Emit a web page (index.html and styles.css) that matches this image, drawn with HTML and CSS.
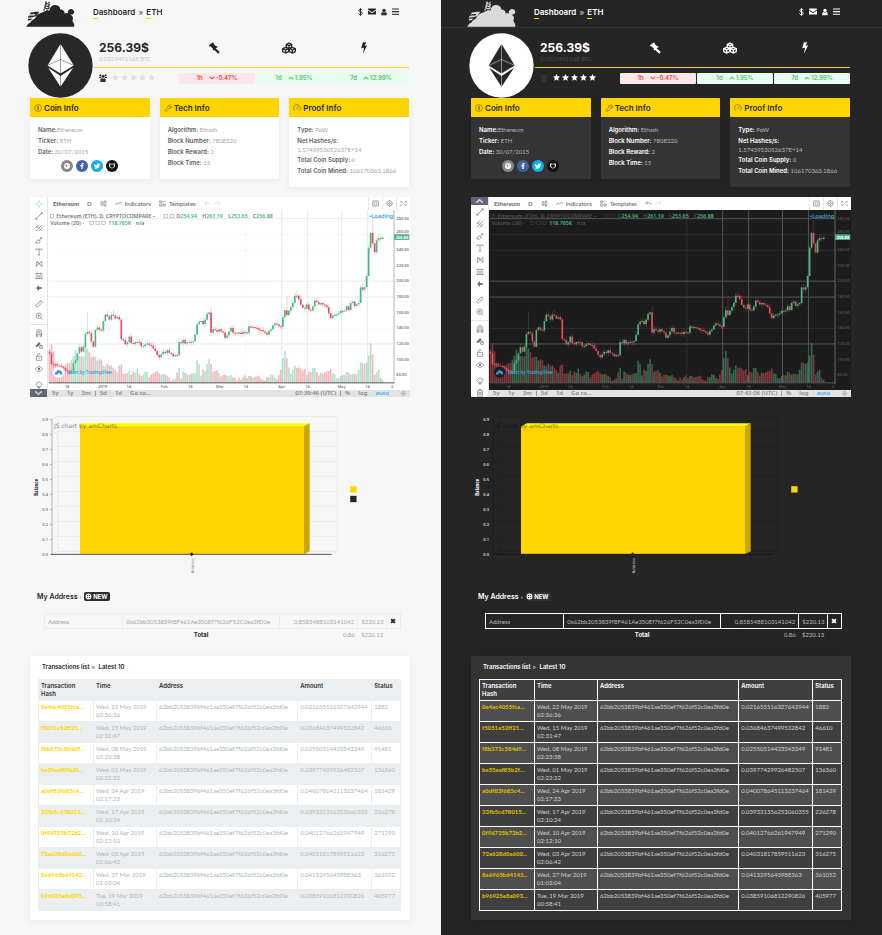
FILE: index.html
```
<!DOCTYPE html>
<html lang="en">
<head>
<meta charset="utf-8">
<title>Dashboard » ETH</title>
<link rel="stylesheet" href="styles.css">
</head>
<body>
<svg class="sprite" aria-hidden="true">
  <symbol id="logo" viewBox="78 0 148 82" overflow="visible">
    <path d="M78 81C82 76 84 70 91 68C95 60 103 59 107 53C111 43 119 39 129 37C134 34 142 31 149 32C151 22 155 15 166 15C178 16 181 22 182 29C190 29 196 34 195 42C200 38 205 40 206 44C203 37 205 28 214 27C224 28 228 38 220 43C216 45 213 44 211 43C217 47 222 51 220 58C217 63 220 67 222 70C225 74 224 78 224 81Z"/>
    <path d="M92 38l20-2-3 6-20 2zM86 48l18-2-3 6-18 2zM84 57l12-1-3 5-10 1zM105 36l13 0-10 14-6-1 5-9z"/>
    <text x="132" y="28" transform="rotate(12 143 20)" class="logo-b">B</text>
    <path d="M137 4l4 1-1 5-4-1zM146 5l4 1-1 5-4-1zM131 27l4 1-1 5-4-1zM140 29l4 1-1 5-4-1z"/>
  </symbol>
  <symbol id="dollar" viewBox="0 0 10 16"><path d="M8.600 4.500C8 3 6.800 2.600 5 2.600C3 2.600 1.700 3.500 1.700 5C1.700 8.600 8.600 6.800 8.600 10.700C8.600 12.400 7 13.300 5 13.300C3 13.300 1.600 12.500 1.200 10.900M5 .5V15.500" class="line2"/></symbol>
  <symbol id="mail" viewBox="0 0 16 14"><path d="M0 2Q0 1 1 1H15Q16 1 16 2V3L8 8.500L0 3ZM0 5L8 10.500L16 5V12Q16 13 15 13H1Q0 13 0 12Z"/></symbol>
  <symbol id="user" viewBox="0 0 14 16"><circle cx="7" cy="4.500" r="4"/><path d="M3 8Q7 11 11 8Q14 9 13.500 15.500H.5Q0 9 3 8Z"/></symbol>
  <symbol id="menu" viewBox="0 0 16 16"><path d="M0 1h16v2.500H0zM0 7h16v2.500H0zM0 13h16v2.500H0z"/></symbol>
  <symbol id="eth" viewBox="82 102 196 196">
    <circle cx="180" cy="200" r="97" class="coin"/>
    <path class="gem" d="M180 135L220 200L180 224L141 200Z"/><path class="gem" d="M143 207L180 232L218 207L180 264Z"/>
    <path class="cut" d="M180 135V264M141 200L180 182L220 200"/>
  </symbol>
  <symbol id="gavel" viewBox="0 0 34 34"><path d="M14 1l3 3-1 2 7 6 2-1 2 3-11 10-3-3 1-2-7-7-2 1-3-3zM19 16l13 11q2 4-3 6L15 20z"/></symbol>
  <symbol id="cubes" viewBox="0 0 42 34"><path class="cube" d="M21 2l8 4v9l-8 4-8-4V6zM13 6l8 4 8-4M21 10v9M11 15l9 4v9l-9 4-9-4v-9zM2 19l9 4 9-4M11 23v9M31 15l9 4v9l-9 4-9-4v-9zM22 19l9 4 9-4M31 23v9"/></symbol>
  <symbol id="bolt" viewBox="0 0 20 34"><path d="M7 1h9l-4 10 7-2L7 33l3-17-8 2z"/></symbol>
  <symbol id="users" viewBox="0 0 24 24"><circle cx="4" cy="4" r="3"/><circle cx="20" cy="4" r="3"/><circle cx="12" cy="7" r="4.500"/><path d="M0 8h7l-1 4q-5 0-6-1zM24 8h-7l1 4q5 0 6-1zM6 12q6 3 12 0q3 3 2 12H4q-1-9 2-12z"/></symbol>
  <symbol id="star" viewBox="0 0 20 20"><path d="M10 0l3 6.500 7 .8-5.200 4.800L16.200 19.500 10 16 3.800 19.500 5.200 12.100 0 7.300l7-.8z"/></symbol>
  <symbol id="up" viewBox="0 0 16 10"><path class="line3" d="M2 8l6-5 6 5"/></symbol>
  <symbol id="down" viewBox="0 0 16 10"><path class="line3" d="M2 2l6 5 6-5"/></symbol>
  <symbol id="coin" viewBox="0 0 24 24"><circle class="line" cx="12" cy="12" r="10.500"/><path class="line" d="M15 8q-6-3-6 1t6 4q1 5-6 2M12 5v14"/></symbol>
  <symbol id="wrench" viewBox="0 0 24 24"><path class="line" d="M15 14L8 22q-5 2-5-4l8-7q-1-8 8-9l-4 5 3 3 5-4q0 8-8 8"/></symbol>
  <symbol id="gauge" viewBox="0 0 24 24"><path class="line" d="M6 21a10.500 10.500 0 1 1 12 0M11 15l6-8M5 13h2M12 5v2M18 13h2"/></symbol>
  <symbol id="globe" viewBox="0 0 24 24"><circle cx="12" cy="12" r="9"/><path class="hole" d="M7 9l4-2 2 3-2 2 1 3-2 1-2-4zM15 7l3 4-2 1z"/></symbol>
  <symbol id="facebook" viewBox="0 0 24 24"><path d="M10 21v-8H7v-4h3V7q0-5 7-4v3q-3-1-3 2v1h3l-1 4h-2v8z"/></symbol>
  <symbol id="twitter" viewBox="0 0 24 24"><path d="M3 5q4 5 9 5-1-6 5-6 2 0 3 1h2l-2 3q0 11-11 12-4 0-7-2 4 0 6-2-3 0-4-3h2q-4-2-3-8z"/></symbol>
  <symbol id="github" viewBox="0 0 24 24"><path d="M9 22v-4q-7-2-6-8 0-2 1-3V3l4 2h8l4-2v4q1 1 1 3 1 6-6 8v4h-1v-6q5-2 4-6-1-3-6-3t-6 3q-1 4 4 6v6z"/></symbol>
  <symbol id="plus" viewBox="0 0 24 24"><circle cx="12" cy="12" r="8" class="line4"/><path d="M10.500 7h3v10h-3zM7 10.500h10v3H7z"/></symbol>
  <symbol id="close" viewBox="0 0 16 16"><path class="line5" d="M3 3l10 10M13 3L3 13"/></symbol>
  <symbol id="t-cross" viewBox="0 0 24 24"><path class="line" d="M12 1v8M12 15v8M1 12h8M15 12h8"/></symbol>
  <symbol id="t-line" viewBox="0 0 24 24"><path class="line" d="M4 20L20 4"/><circle class="line" cx="3.500" cy="20.500" r="2"/><circle class="line" cx="20.500" cy="3.500" r="2"/></symbol>
  <symbol id="t-fork" viewBox="0 0 24 24"><path class="line" d="M2 12L12 2M3 21L20 4M11 22L22 11M4 6l6 6M12 13l7 7"/></symbol>
  <symbol id="t-brush" viewBox="0 0 24 24"><path class="line" d="M22 3L13 13q5 2 1 6-5 4-12 2l3-6q3-5 8-2M16 3l5 6"/></symbol>
  <symbol id="t-text" viewBox="0 0 24 24"><path class="line" d="M3 7V3h18v4M12 3v18M8 21h8"/></symbol>
  <symbol id="t-pattern" viewBox="0 0 24 24"><path class="line" d="M3 20L6 4l15 16L20 4 3 20M6 4l8 9"/></symbol>
  <symbol id="t-forecast" viewBox="0 0 24 24"><path class="line" d="M1 5h22M1 12h9M14 12h9M1 19h22M6 2v6M17 2v6M12 9v12M5 16v6M19 16v6"/></symbol>
  <symbol id="t-arrow" viewBox="0 0 24 24"><path d="M3 12l9-9v6h8v6h-8v6z"/></symbol>
  <symbol id="t-ruler" viewBox="0 0 24 24"><path class="line" d="M2 17L17 2l5 5L7 22zM7 12l2 2M11 8l2 2M15 4l2 2"/></symbol>
  <symbol id="t-zoom" viewBox="0 0 24 24"><circle class="line" cx="11" cy="11" r="8"/><path class="line" d="M17 17l5 5M7 11h8M11 7v8"/></symbol>
  <symbol id="t-magnet" viewBox="0 0 24 24"><path class="line" d="M4 22V10q0-8 8-8t8 8v12h-5V11q0-4-3-4t-3 4v11zM4 17h5M15 17h5"/></symbol>
  <symbol id="t-pen" viewBox="0 0 24 24"><path d="M2 14L12 3l5 5-9 9-6 1z"/><path class="line" d="M14 15h8v7h-8zM16 15v-3q2-3 4 0v3"/></symbol>
  <symbol id="t-lock" viewBox="0 0 24 24"><path class="line" d="M4 10h16v12H4zM8 10V5q0-3 4-3 4 0 4 3M12 14v4"/></symbol>
  <symbol id="t-eye" viewBox="0 0 24 24"><path class="line" d="M1 12q11-15 22 0-11 15-22 0z"/><circle cx="12" cy="12" r="3.500"/></symbol>
  <symbol id="t-tree" viewBox="0 0 24 24"><path class="line" d="M12 2q9 4 9 9l-5 6H8l-5-6q0-5 9-9zM8 17l4 5 4-5M12 17v5"/></symbol>
  <symbol id="t-trash" viewBox="0 0 24 24"><path class="line" d="M4 5h16M9 5V2h6v3M5 5v17h14V5M9 9v9M12 9v9M15 9v9"/></symbol>
  <symbol id="t-candle" viewBox="0 0 24 24"><path class="line" d="M4 7h6v10H4zM14 5h6v14h-6zM7 3v4M7 17v4M17 1v4M17 19v4"/></symbol>
  <symbol id="t-ind" viewBox="0 0 24 24"><path class="line" d="M1 17l6-7 5 5 5-7 3 3 3-5"/></symbol>
  <symbol id="t-tmpl" viewBox="0 0 24 24"><path class="line" d="M2 3h8v6H2zM14 8q4-8 8-3M2 14h8v7H2zM14 14h8v7h-8z"/></symbol>
  <symbol id="t-undo" viewBox="0 0 24 24"><path class="line" d="M9 5L3 10l6 5M3 10h13q5 0 5 7"/></symbol>
  <symbol id="t-redo" viewBox="0 0 24 24"><path class="line" d="M15 5l6 5-6 5M21 10H8q-5 0-5 7"/></symbol>
  <symbol id="t-camera" viewBox="0 0 24 24"><path class="line" d="M2 3h20v18H2z"/><circle class="line" cx="12" cy="12" r="5"/></symbol>
  <symbol id="t-gear" viewBox="0 0 24 24"><circle class="line" cx="12" cy="12" r="9"/><circle class="line" cx="12" cy="12" r="3"/><path class="line" d="M12 0v5M12 19v5M1 12h4M19 12h4"/></symbol>
  <symbol id="t-full" viewBox="0 0 24 24"><path class="line" d="M3 4l6 5M21 4l-6 5M3 20l6-5M21 20l-6-5M3 9V4M21 9V4M3 15v5M21 15v5"/></symbol>
</svg>

<main class="themes" id="themes"></main>

<template id="panel">
  <header class="bar">
    <svg class="logo"><use href="#logo"/></svg>
    <nav class="crumbs"><a href="#">Dashboard</a><span>»</span><a href="#">ETH</a></nav>
    <nav class="actions">
      <a href="#" aria-label="Prices"><svg class="i-dollar"><use href="#dollar"/></svg></a>
      <a href="#" aria-label="Messages"><svg class="i-mail"><use href="#mail"/></svg></a>
      <a href="#" aria-label="Account"><svg class="i-user"><use href="#user"/></svg></a>
      <button type="button" aria-label="Menu"><svg class="i-menu"><use href="#menu"/></svg></button>
    </nav>
  </header>

  <section class="hero">
    <svg class="coin-logo"><use href="#eth"/></svg>
    <div class="hero-main">
      <div class="hero-top">
        <div><h1>256.39$</h1><p class="btc">0.0323491168 BTC</p></div>
        <svg class="stat"><use href="#gavel"/></svg>
        <svg class="stat"><use href="#cubes"/></svg>
        <svg class="stat"><use href="#bolt"/></svg>
      </div>
      <div class="hero-bottom">
        <div class="rating"><svg class="i-users"><use href="#users"/></svg><svg><use href="#star"/></svg><svg><use href="#star"/></svg><svg><use href="#star"/></svg><svg><use href="#star"/></svg><svg><use href="#star"/></svg></div>
        <div class="badges">
          <div class="badge loss"><span>1h</span><span><svg><use href="#down"/></svg>-0.47%</span></div>
          <div class="badge gain"><span>1d</span><span><svg><use href="#up"/></svg>1.95%</span></div>
          <div class="badge gain"><span>7d</span><span><svg><use href="#up"/></svg>12.99%</span></div>
        </div>
      </div>
    </div>
  </section>

  <section class="cards">
    <article class="card">
      <h2><svg><use href="#coin"/></svg>Coin Info</h2>
      <div class="card-body">
        <ul class="facts"><li><b>Name:</b>Ethereum</li><li><b>Ticker:</b> ETH</li><li><b>Date:</b> 30/07/2015</li></ul>
        <div class="social">
          <a class="web" href="#" aria-label="Website"><svg><use href="#globe"/></svg></a>
          <a class="fb" href="#" aria-label="Facebook"><svg><use href="#facebook"/></svg></a>
          <a class="tw" href="#" aria-label="Twitter"><svg><use href="#twitter"/></svg></a>
          <a class="gh" href="#" aria-label="GitHub"><svg><use href="#github"/></svg></a>
        </div>
      </div>
    </article>
    <article class="card">
      <h2><svg><use href="#wrench"/></svg>Tech Info</h2>
      <div class="card-body">
        <ul class="facts"><li><b>Algorithm:</b> Ethash</li><li><b>Block Number:</b> 7808320</li><li><b>Block Reward:</b> 2</li><li><b>Block Time:</b> 15</li></ul>
      </div>
    </article>
    <article class="card">
      <h2><svg><use href="#gauge"/></svg>Proof Info</h2>
      <div class="card-body">
        <ul class="facts"><li><b>Type:</b> PoW</li><li><b>Net Hashes/s:</b><span class="long">1.5745953052637E+14</span></li><li><b>Total Coin Supply:</b> 0</li><li><b>Total Coin Mined:</b> 106170363.1866</li></ul>
      </div>
    </article>
  </section>

  <section class="trading">
    <div class="tools"></div>
    <div class="trading-main">
      <div class="t-top">
        <b>Ethereum</b><span>D</span><svg><use href="#t-candle"/></svg>
        <span class="pair"><svg><use href="#t-ind"/></svg>Indicators</span>
        <span class="pair"><svg><use href="#t-tmpl"/></svg>Templates</span>
        <svg class="undo"><use href="#t-undo"/></svg><svg class="faint"><use href="#t-redo"/></svg>
        <svg class="push cell"><use href="#t-camera"/></svg><svg class="cell"><use href="#t-gear"/></svg><svg class="cell"><use href="#t-full"/></svg>
      </div>
      <svg class="plot" viewBox="81 60 1089 540" role="img" aria-label="ETH daily price"></svg>
      <div class="t-bottom"><span>5y</span><span>1y</span><span>3m</span><i></i><span>5d</span><span>1d</span><span>Go to...</span><span class="push clock"></span><i></i><span>%</span><span>log</span><span class="auto">auto</span><svg><use href="#t-gear"/></svg></div>
    </div>
  </section>

  <svg class="balance" viewBox="30 0 1140 525" role="img" aria-label="Balance by address"></svg>

  <section class="mine">
    <div class="mine-head"><h3>My Address</h3><span>»</span><button type="button"><svg><use href="#plus"/></svg>NEW</button></div>
    <table class="addr">
      <colgroup><col class="c22"><col class="c44"><col class="c22"><col class="c8"><col></colgroup>
      <tbody>
        <tr><td>Address</td><td>0x62bb2053839f8F461Ae350Ef7f626F52C0ea3fD0e</td><td class="num">0,8585488103141042</td><td class="num">$220.13</td><td class="del"><button type="button" aria-label="Remove address"><svg><use href="#close"/></svg></button></td></tr>
      </tbody>
      <tfoot><tr><td></td><th scope="row">Total</th><td class="num">0.86</td><td class="num">$220.13</td><td></td></tr></tfoot>
    </table>
  </section>

  <section class="tx">
    <h3>Transactions list <span>»</span> Latest 10</h3>
    <table>
      <colgroup><col class="w-hash"><col class="w-time"><col class="w-addr"><col class="w-amt"><col></colgroup>
      <thead><tr><th>Transaction Hash</th><th>Time</th><th>Address</th><th>Amount</th><th>Status</th></tr></thead>
      <tbody></tbody>
    </table>
  </section>
</template>
<script src="app.js"></script>
</body>
</html>
```
FILE: styles.css
```
* { box-sizing: border-box; }
body { margin: 0; font: 6px/8px Lato, "Open Sans", sans-serif; background: #f7f7f7; }
h1, h2, h3, p, ul { margin: 0; padding: 0; list-style: none; }
a { color: inherit; text-decoration: none; }
button { border: 0; padding: 0; background: none; color: inherit; font: inherit; display: flex; align-items: center; }
svg { display: block; fill: currentColor; }
.sprite { position: absolute; width: 0; height: 0; }
.line, .line2, .line3, .line4, .line5, .cube, .cut { fill: none; stroke: currentColor; }
.line { stroke-width: 2; }
.line2 { stroke-width: 2; }
.line3 { stroke-width: 3; }
.line4 { stroke-width: 4; }
.line5 { stroke-width: 5; }
.cube { stroke-width: 4; }
.hole { fill: #888; }
.logo-b { font: 900 26px "Liberation Sans", sans-serif; }

.themes { display: grid; grid-template-columns: 1fr 1fr; min-height: 100vh; }
.panel { background: var(--bg); color: var(--muted); padding-bottom: 15px; min-width: 0; }
.light {
  --bg: #f7f7f7; --card: #fff; --strong: #282828; --muted: #a6a6a6; --label: #606366; --btc: #c6c6c6;
  --rule: #f7f7f7; --logo: #252525; --users: #333; --star: #dedede; --coin: #282828; --gem: #fff;
  --shadow: 0 2px 8px #0000000d; --cell: #e9eeee; --odd: #fff; --even: #ebeff0; --txt: #adb6ba; --hash: #ffd800; --th: #303030;
  --plot: #fff; --grid: #e4ecf2; --axis: #555; --tick: #777; --legend: #707780; --wall: #e6e6e6; --base: #555; --bal: #777; --new: #2c2c2c; --volop: .4;
}
.dark {
  --bg: #252525; --card: #343434; --strong: #fff; --muted: #b9b9b9; --label: #fff; --btc: #484848;
  --rule: #363636; --logo: #dadada; --users: #363636; --star: #fff; --coin: #fff; --gem: #282828;
  --shadow: 0 2px 8px #0000001c; --cell: #fff; --odd: #4f4f4f; --even: #3f3f3f; --txt: #d2d2d2; --hash: #dcb900; --th: #fff;
  --plot: #1c1c1c; --grid: #555; --axis: #555; --tick: #505050; --legend: #505050; --wall: #212121; --base: #161616; --bal: #ddd; --new: #303030; --volop: .5;
}

.bar { height: 28px; padding: 0 42px 0 26px; display: flex; align-items: center; border-bottom: 1px solid var(--rule); color: var(--strong); }
.logo { width: 49px; height: 27px; color: var(--logo); overflow: visible; }
.crumbs { margin-left: 18px; padding-bottom: 1px; display: flex; gap: 3px; font: 600 8px/10px Inter, sans-serif; }
.crumbs a { background: linear-gradient(#ffd500, #ffd500) left bottom / 5px 1px no-repeat; height: 12px; }
.crumbs span { opacity: .6; }
.actions { margin-left: auto; padding-bottom: 4px; display: flex; gap: 5px; align-items: center; }
.i-dollar { width: 5px; height: 8px; }
.i-mail { width: 8px; height: 7px; }
.i-user { width: 6px; height: 8px; }
.i-menu { width: 7px; height: 7px; }

.hero { padding: 5px 32px 0 28px; display: flex; gap: 1px; }
.coin-logo { width: 65px; height: 65px; flex: none; }
.coin { fill: var(--coin); }
.gem { fill: var(--gem); }
.cut { stroke: var(--coin); stroke-width: 2; opacity: .7; }
.hero-main { flex: 1; min-width: 0; }
.hero-top { height: 35px; padding: 7px 8px 0 5px; display: grid; grid-template-columns: 77px repeat(3, 1fr); border-bottom: 1px solid #fad51d; color: var(--strong); }
h1 { font: 700 12px/15px Inter, sans-serif; }
.btc { color: var(--btc); line-height: 8px; }
.stat { width: 14px; height: 12px; margin: 2px auto 0; }
.hero-bottom { padding-top: 5px; display: flex; }
.rating { width: 85px; padding: 0 0 2px 5px; display: flex; align-items: center; gap: 2px; color: var(--star); }
.rating svg { width: 7px; height: 7px; }
.rating .i-users { width: 8px; height: 8px; margin-right: 3px; color: var(--users); }
.badges { flex: 1; display: grid; grid-template-columns: repeat(3, 1fr); gap: 1px; }
.badge { height: 11px; padding-bottom: 1px; border-radius: 1px; display: flex; justify-content: center; align-items: center; gap: 6px; font: 600 6px/8px Inter, sans-serif; }
.badge span { display: flex; align-items: center; gap: 1px; }
.badge svg { width: 6px; height: 4px; }
.loss { background: #fbe6ea; color: #ff4a35; }
.gain { background: #e6fcec; color: #55c96a; }

.cards { margin: 0 32px 0 30px; display: grid; grid-template-columns: repeat(3, 1fr); gap: 10px; align-items: start; height: 89px; }
.card { background: var(--card); box-shadow: var(--shadow); border-radius: 1px; }
.card h2 { height: 19px; padding: 0 4px; display: flex; align-items: center; gap: 2px; background: #ffd500; color: #282828; font: 600 8px/10px Inter, sans-serif; border-radius: 1px 1px 0 0; }
.card h2 svg { width: 8px; height: 8px; opacity: .6; }
.card-body { padding: 7px 8px; }
.facts { margin-bottom: 4px; line-height: 11px; }
.facts li { white-space: nowrap; }
.facts b { font: 600 6px/11px Inter, sans-serif; color: var(--label); }
.long { display: block; line-height: 8px; }
.social { margin-top: -1px; display: flex; justify-content: center; gap: 3px; color: #fff; }
.social a { width: 12px; height: 12px; border-radius: 50%; display: flex; align-items: center; justify-content: center; }
.social svg { width: 8px; height: 8px; }
.web { background: #888; }
.fb { background: #4562a0; }
.tw { background: #12aeea; }
.gh { background: #111; }

.trading { margin: 10px 31px 0 30px; display: flex; background: #ececec; color: #6c717b; font: 600 6px/8px "Noto Sans", sans-serif; }
.tools { width: 17px; flex: none; padding-top: 3px; display: flex; flex-direction: column; align-items: center; gap: 4px; background: #fff; }
.tools svg { width: 8px; height: 8px; }
.tools .first { color: #55bfee; }
.tools hr { width: 100%; margin: 0; border: 0; border-top: 1px solid #e3e5e8; }
.tools .spaced { margin-top: 4px; }
.tools .fold { width: 17px; height: 8px; padding: 1px 4px; margin-top: -4px; background: #626573; color: #ccc; }
.dark .tools { padding-top: 0; }
.dark .tools .fold { margin: 0 0 -1px; }
.trading-main { flex: 1; min-width: 0; border-left: 1px solid #e3e5e8; }
.t-top { height: 13px; display: flex; align-items: center; gap: 8px; padding-left: 5px; background: #fff; font-family: Lato, sans-serif; }
.t-top svg { width: 7px; height: 7px; }
.pair { display: flex; align-items: center; gap: 3px; }
.t-top .undo { opacity: .4; }
.dark .t-top .undo { opacity: 1; }
.t-top .faint { opacity: .3; margin-left: -5px; }
.push { margin-left: auto; }
.t-top .cell { width: 14px; height: 13px; padding: 3px; border-left: 1px solid #e3e5e8; }
.t-top .cell + .cell { margin-left: -8px; }
.plot { width: 100%; height: auto; background: var(--plot); font-family: "Noto Sans", sans-serif; }
.plot .grid { stroke: var(--grid); stroke-width: 3; }
.plot .grid.soft { stroke-width: 1; }
.plot .axis { stroke: var(--axis); stroke-width: 3; }
.plot .side { stroke: #8a9097; stroke-width: 2; }
.plot .up { fill: #4cb583; stroke: #4cb583; }
.plot .dn { fill: #e94d5c; stroke: #e94d5c; }
.plot .wick { stroke-width: 2; opacity: .4; }
.plot .body { stroke: none; }
.plot .vol { stroke: none; opacity: var(--volop); }
.plot .tick { font-size: 12px; fill: var(--tick); }
.plot .mid { text-anchor: middle; }
.plot .info { font-size: 16px; font-weight: 600; fill: var(--legend); }
.plot .val { fill: #4cb583; }
.plot .box { fill: none; stroke: var(--legend); stroke-width: 2; opacity: .6; }
.plot .load { fill: #3c9fdc; font-size: 17px; text-anchor: end; }
.plot .tag { fill: #4cb583; }
.plot .tagtext { fill: #fff; font-size: 12px; font-weight: 700; }
.plot .disc { fill: var(--plot); }
.plot .cloud { fill: #2d96e8; }
.plot .brand { fill: #3c9fdc; font-size: 13px; font-weight: 600; }
.t-bottom { height: 7px; display: flex; align-items: center; gap: 8px; padding: 0 4px; color: #85878b; background: #e2e3e5; line-height: 7px; }
.t-bottom i { width: 1px; height: 5px; margin: 0 -4px; background: #999; }
.t-bottom svg { width: 5px; height: 5px; margin-left: 4px; }
.auto { color: #36b5ea; }

.balance { margin: 13px 31px 0 30px; width: calc(100% - 61px); height: auto; font-family: "Noto Sans", sans-serif; }
.balance .wall { fill: none; stroke: var(--wall); stroke-width: 2; }
.balance .base { fill: none; stroke: var(--base); stroke-width: 3; }
.balance .vaxis { stroke: var(--base); stroke-width: 2; opacity: .6; }
.balance .front { fill: #ffd500; }
.balance .top { fill: #ff0; }
.balance .right { fill: #caa800; }
.balance .num { font-size: 12px; font-weight: 600; fill: var(--bal); text-anchor: end; }
.balance .name { font-size: 13px; font-weight: 700; fill: var(--strong); text-anchor: middle; }
.balance .cat { font-size: 12px; fill: var(--bal); text-anchor: middle; }
.balance .credit { font: 18px Verdana, "DejaVu Sans", sans-serif; fill: #000; opacity: .5; }
.balance .dot { fill: #252525; }
.balance .key { stroke: #ffd50080; stroke-width: 2; fill: #ffd500; }
.balance .key2 { stroke: #25252580; stroke-width: 2; fill: #252525; }

.mine { margin: 6px 40px 0 44px; }
.mine-head { height: 11px; margin: 0 0 11px -7px; display: flex; align-items: center; gap: 2px; }
h3 { font: 600 7px/11px Inter, sans-serif; color: var(--strong); }
.mine-head button { height: 9px; padding: 0 2px 0 1px; gap: 1px; border-radius: 2px; background: var(--new); color: #fff; font: 700 6px/9px Inter, sans-serif; }
.mine-head button svg { width: 7px; height: 7px; }
table { width: 100%; border-collapse: collapse; table-layout: fixed; }
.addr td, .addr th { padding: 0 3px; height: 12px; line-height: 11px; white-space: nowrap; }
.addr tbody td { border: 1px solid var(--cell); height: 15px; }
.addr th { font: 700 6px/11px Inter, sans-serif; color: var(--strong); }
.num { text-align: right; }
.addr .del { padding: 0; color: var(--strong); }
.del button { margin: 0 auto; }
.del svg { width: 6px; height: 6px; }
.c22 { width: 22%; }
.c44 { width: 44%; }
.c8 { width: 8%; }

.tx { margin: 15px 31px 0 30px; padding: 5px 9px 9px 8px; background: var(--card); box-shadow: var(--shadow); border-radius: 1px; }
.tx h3 { margin: 0 0 7px 4px; font-size: 6px; }
.tx h3 span { margin-right: 2px; opacity: .6; }
.tx th, .tx td { border: 1px solid var(--cell); height: 21px; padding: 2px; text-align: left; vertical-align: top; color: var(--txt); background: var(--even); }
.tx th { font: 600 6px/8px Inter, sans-serif; color: var(--th); }
.tx tbody tr:nth-child(odd) td { background: var(--odd); }
.tx td { white-space: nowrap; }
.tx td a { color: var(--hash); font-weight: 900; }
.w-hash { width: 55px; }
.w-time { width: 63px; }
.w-addr { width: 39%; }
.w-amt { width: 74px; }
```
FILE: app.js
```
const panels = [
  { theme: 'light', clock: '07:39:46 (UTC)' },
  { theme: 'dark', clock: '07:43:06 (UTC)' }
];

const transactions = [
  ['0e4ac4055fca...', 'Wed, 22 May 2019', '02:36:36', '0.021655516327642944', '1882'],
  ['f5051a52ff21...', 'Wed, 15 May 2019', '02:31:47', '0.03684637499532842', '46610'],
  ['f8b373c584d9...', 'Wed, 08 May 2019', '02:23:38', '0.02550514423543349', '91481'],
  ['be55aaf85b2f...', 'Wed, 01 May 2019', '02:22:22', '0.03977429926482507', '136360'],
  ['a0df83f685c4...', 'Wed, 24 Apr 2019', '02:17:23', '0.040078645113237464', '181429'],
  ['33fb5cd78015...', 'Wed, 17 Apr 2019', '02:10:24', '0.039331356253060355', '226278'],
  ['0f96735b72b2...', 'Wed, 10 Apr 2019', '02:12:10', '0.04012766261947949', '271290'],
  ['72a628d0a600...', 'Wed, 03 Apr 2019', '02:06:42', '0.04031817859511623', '316275'],
  ['8e6965bd4143...', 'Wed, 27 Mar 2019', '01:03:04', '0.0413295645988363', '361052'],
  ['b96925e8a093...', 'Tue, 19 Mar 2019', '00:58:41', '0.03859106812290826', '405977']
];

const closes = '83:487 89:505 95:535 101:522 110:530 120:530 135:545 150:548 155:532 165:505 175:472 184:485 190:465 196:415 202:435 208:425 214:470 220:470 222:425 228:415 240:425 246:418 250:380 258:375 264:392 270:372 276:375 282:388 290:385 298:390 300:443 308:447 316:470 325:437 335:465 342:462 350:455 356:455 360:450 362:472 372:468 380:465 400:475 408:492 412:502 420:498 426:488 434:492 440:485 448:495 460:498 466:502 472:500 474:462 482:460 486:450 494:463 500:460 510:456 520:458 526:430 532:395 540:395 548:402 556:390 562:370 567:365 570:432 580:420 590:430 596:420 608:430 616:450 622:425 632:418 640:432 652:425 664:430 670:430 678:435 686:412 692:410 700:418 714:415 720:422 730:425 742:432 754:415 768:402 774:410 785:412 790:357 796:365 802:375 808:360 820:330 826:317 832:325 838:327 844:357 852:355 858:348 862:345 868:368 874:355 886:333 898:343 904:343 912:340 918:350 924:365 930:385 936:378 942:370 950:378 958:365 964:358 972:365 980:350 984:362 996:335 1002:348 1019:338 1022:293 1030:302 1038:282 1042:235 1047:158 1053:123 1059:168 1066:195 1072:130 1078:152 1084:145 1090:142';
const volumes = '83:500 90:465 96:450 100:515 110:520 120:535 130:520 150:520 165:470 170:500 185:490 190:500 196:450 202:485 208:490 215:515 222:485 228:520 240:505 250:525 262:515 270:530 285:545 294:545 300:508 306:550 325:545 340:552 350:532 360:555 375:545 385:560 400:545 412:540 420:560 430:548 440:562 460:570 466:560 474:522 480:563 490:548 505:553 515:545 524:545 528:515 534:505 542:555 548:535 556:550 560:522 566:505 570:500 576:555 590:535 605:560 620:550 630:558 650:565 670:560 690:555 700:565 720:560 735:570 750:550 770:562 780:550 790:500 796:480 802:525 812:545 820:540 826:520 832:535 838:535 850:540 862:550 874:540 886:540 896:550 912:548 924:552 930:530 936:555 950:562 965:560 975:550 990:548 1000:545 1010:560 1018:530 1024:508 1030:525 1040:512 1046:490 1052:462 1058:495 1064:560 1070:540 1078:545 1085:565 1090:573';
const spikes = { 19: 365, 32: 360, 81: 350, 119: 320, 124: 303, 162: 90 };

const points = s => s.split(' ').map(p => p.split(':').map(Number));
const at = (list, x) => {
  if (x <= list[0][0]) return list[0][1];
  for (let i = 1; i < list.length; i++) {
    const [x1, y1] = list[i], [x0, y0] = list[i - 1];
    if (x <= x1) return y0 + (y1 - y0) * (x - x0) / (x1 - x0);
  }
  return list[list.length - 1][1];
};
const noise = i => { const n = Math.sin(i * 12.9898) * 43758.5453; return n - Math.floor(n); };
const boxes = (x, y, n) => Array.from({ length: n }, (_, i) => `<rect class="box" x="${x + i * 18}" y="${y}" width="10" height="10"/>`).join('');

function plot() {
  let s = '';
  [86, 274, 322, 416, 463].forEach(y => s += `<path class="grid${y === 416 ? ' soft' : ''}" d="M84 ${y}H1122"/>`);
  [134, 181].forEach(y => s += `<path class="grid soft" d="M84 ${y}H1122"/>`);
  [676, 784, 862, 964, 1042].forEach(x => s += `<path class="grid${x === 676 ? ' soft' : ''}" d="M${x} 60V580"/>`);
  const c = points(closes), v = points(volumes);
  let prev = 487, bodies = '';
  for (let i = 0; i < 168; i++) {
    const x = 86 + i * 6;
    const close = at(c, x) + (x < 1015 ? (noise(i) - .5) * 9 : 0);
    const kind = close <= prev ? 'up' : 'dn';
    const top = Math.min(prev, close), h = Math.max(3, Math.abs(close - prev));
    const vt = Math.min(574, at(v, x) + (noise(i + 400) - .4) * 14);
    s += `<rect class="vol ${kind}" x="${x - 3}" y="${vt}" width="5" height="${580 - vt}"/>`;
    const hi = spikes[i] || top - 2 - noise(i + 90) * 9;
    bodies += `<path class="wick ${kind}" d="M${x} ${hi}V${Math.min(578, top + h + 2 + noise(i + 50) * 7)}"/>`;
    bodies += `<rect class="body ${kind}" x="${x - 3}" y="${top}" width="5" height="${h}"/>`;
    prev = close;
  }
  s += bodies + '<path class="axis" d="M84 580H1122"/><path class="side" d="M1122 60V584"/>';
  [280, 260, 240, 220, 200, 180, 160, 140, 120, 100, 80].forEach((p, i) => {
    const y = p === 260 ? 130 : 90 + i * 47;
    s += `<text class="tick" x="1129" y="${y}">${p}.00</text>`;
  });
  [['14', 138], ['2019', 246], ['14', 324], ['Feb', 431], ['14', 509], ['Mar', 598], ['14', 676], ['Apr', 784], ['14', 862], ['May', 964], ['14', 1042], ['2', 1116]].forEach(([t, x]) =>
    s += `<text class="tick mid" x="${x}" y="596">${t}</text>`);
  s += '<rect class="tag" x="1122" y="133" width="46" height="17"/><text class="tagtext" x="1127" y="146">256.88</text>';
  s += boxes(88, 73, 1) + '<text class="info" x="106" y="84">Ethereum (ETH), D, CRYPTOCOMPARE –</text>' + boxes(430, 73, 2);
  [['O', '254.94', 467], ['H', '261.19', 545], ['L', '253.65', 623], ['C', '256.88', 697]].forEach(([k, n, x]) =>
    s += `<text class="info" x="${x}" y="84">${k}<tspan class="val">${n}</tspan></text>`);
  s += '<text class="info" x="88" y="105">Volume (20) -</text>' + boxes(207, 94, 3) + '<text class="info val" x="262" y="105">118.765K</text><text class="info" x="345" y="105">n/a</text>';
  s += '<text class="load" x="1120" y="84">▪Loading</text>';
  s += '<circle class="disc" cx="113" cy="548" r="17"/><path class="cloud" d="M102 555Q100 547 106 547Q109 539 116 543Q124 544 124 555H118L114 549L109 555Z"/><text class="brand" x="138" y="553">Chart by TradingView</text>';
  return s;
}

function balance(dark) {
  let s = '<path class="wall" d="M113 20H952V424H113ZM935 433L952 424"/>';
  for (let i = 0; i < 10; i++) {
    const y = 28 + i * 45;
    s += `<path class="wall" d="M96 ${y}L113 ${y - 9}H952"/><path class="vaxis" d="M90 ${y}H96"/><text class="num" x="84" y="${y + 5}">${((9 - i) / 10).toFixed(1)}</text>`;
  }
  s += '<path class="vaxis" d="M96 28V433"/>';
  s += `<path class="top" d="M180 50L${dark ? 197 : 180} 40H869L852 50Z"/><path class="right" d="M852 49L869 40V424L852 433Z"/><path class="front" d="M180 49H852V433H180Z"/>`;
  s += '<path class="base" d="M93 433H935"/><path class="dot" d="M515 427L521 433L515 439L509 433Z"/>';
  s += '<text class="cat" transform="translate(523 467) rotate(-90)">Address</text><text class="name" transform="translate(55 232) rotate(-90)">Balance</text>';
  s += '<text class="credit" x="102" y="54">JS chart by amCharts</text>';
  s += '<rect class="key" x="991" y="229" width="18" height="18"/><rect class="key2" x="991" y="258" width="18" height="18"/>';
  return s;
}

function tools(dark) {
  const icon = (n, cls = '') => `<svg class="${cls}"><use href="#${n}"/></svg>`;
  const list = ['t-line', 't-fork', 't-brush', 't-text', 't-pattern', 't-forecast', 't-arrow'].map(n => icon(n)).join('')
    + icon('t-ruler', 'spaced') + icon('t-zoom') + '<hr>'
    + ['t-magnet', 't-pen', 't-lock', 't-eye'].map(n => icon(n)).join('') + icon('t-tree', 'spaced');
  return dark ? icon('up', 'fold') + list + icon('t-trash') : icon('t-cross', 'first') + list + icon('down', 'fold');
}

panels.forEach(({ theme, clock }) => {
  const dark = theme === 'dark';
  const el = document.createElement('div');
  el.className = 'panel ' + theme;
  el.append(document.getElementById('panel').content.cloneNode(true));
  el.querySelector('.tools').innerHTML = tools(dark);
  el.querySelector('.plot').innerHTML = plot();
  el.querySelector('.balance').innerHTML = balance(dark);
  el.querySelector('.clock').textContent = clock;
  el.querySelector('.tx tbody').innerHTML = transactions.map(([hash, day, time, amount, status]) =>
    `<tr><td><a href="#">${hash}</a></td><td>${day}<br>${time}</td><td>62bb2053839bf461ae350ef7f626f52c0ea3fd0e</td><td>${amount}</td><td>${status}</td></tr>`).join('');
  document.getElementById('themes').append(el);
});
```
